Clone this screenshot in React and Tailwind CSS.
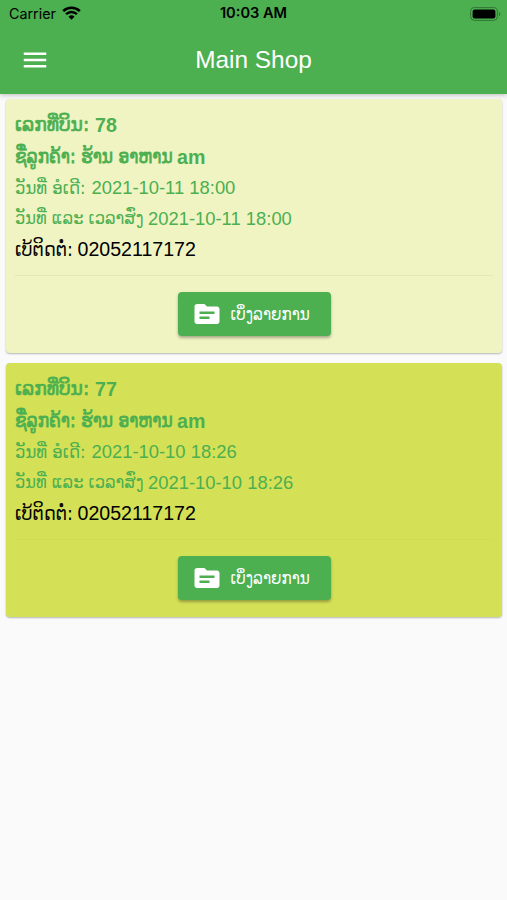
import { MdMenu, MdTopic } from 'react-icons/md';

const orders = [
  {
    bill: '78',
    customer: 'am',
    orderedAt: '2021-10-11 18:00',
    deliverAt: '2021-10-11 18:00',
    phone: '02052117172',
    background: 'bg-[#f0f4c3]',
    divider: 'bg-[#e4e8b9]'
  },
  {
    bill: '77',
    customer: 'am',
    orderedAt: '2021-10-10 18:26',
    deliverAt: '2021-10-10 18:26',
    phone: '02052117172',
    background: 'bg-[#d4e157]',
    divider: 'bg-[#cfdc55]'
  }
];

function StatusBar() {
  return (
    <div className="grid h-7 grid-cols-[1fr_auto_1fr] items-center px-[9px] text-black">
      <div className="flex items-center gap-[6px] font-['Inter'] text-[14.3px]">
        <span>Carrier</span>
        <svg
          className="-mt-[2px]"
          width="19"
          height="14"
          viewBox="0 0 19 14"
          fill="none"
          stroke="black"
        >
          <path d="M1.2 5.1a12 12 0 0 1 16.6 0" strokeWidth="2.7" />
          <path d="M4.1 8.2a7.8 7.8 0 0 1 10.8 0" strokeWidth="2.5" />
          <path d="M9.5 13.8 6.5 10.8a4.3 4.3 0 0 1 6 0z" fill="black" stroke="none" />
        </svg>
      </div>
      <div className="text-center font-['Inter'] text-[14.6px] font-semibold whitespace-nowrap">
        10:03 AM
      </div>
      <svg className="-mt-px -mr-[3px] justify-self-end" width="31" height="14" viewBox="0 0 31 14">
        <rect x="0.6" y="0.6" width="26.8" height="12.8" rx="4" fill="none" stroke="#317534" />
        <rect x="2.6" y="2.6" width="22.8" height="8.8" rx="2.2" fill="black" />
        <path d="M29 4.8c1.8.7 1.8 3.7 0 4.4z" fill="#317534" />
      </svg>
    </div>
  );
}

function Lao({ className, children }) {
  return (
    <span
      className={`inline-block shrink-0 font-['DejaVu_Sans',sans-serif] font-normal ${className}`}
    >
      {children}
    </span>
  );
}

function OrderCard({ order }) {
  return (
    <section
      className={`flex h-[254px] flex-col rounded-[4px] px-[9px] pt-[11px] shadow-[0_1px_2px_rgba(0,0,0,0.28)] ${order.background}`}
    >
      <div className="font-['Liberation_Sans',sans-serif] whitespace-nowrap text-[#4caf50]">
        <p className="flex h-8 items-center text-[19.6px] font-bold">
          <Lao className="mb-[2px] w-[80px] scale-y-106 text-[18.7px] [-webkit-text-stroke:0.7px_#4caf50]">
            ເລກທີ່ບິນ:
          </Lao>
          {order.bill}
        </p>
        <p className="flex h-[31px] items-center text-[19.6px] font-bold">
          <Lao className="mb-px w-[162px] scale-y-112 text-[17px] [-webkit-text-stroke:0.7px_#4caf50]">
            ຊື່ລູກຄ້າ: ຮ້ານ ອາຫານ
          </Lao>
          {order.customer}
        </p>
        <p className="flex h-[30px] items-center text-[18.4px]">
          <Lao className="w-[76.5px] scale-y-112 text-[16.5px]">ວັນທີ່ ອໍເດີ:</Lao>
          {order.orderedAt}
        </p>
        <p className="flex h-[31px] items-center text-[18.4px]">
          <Lao className="w-[133px] scale-y-112 text-[16.3px]">ວັນທີ່ ແລະ ເວລາສົ່ງ</Lao>
          {order.deliverAt}
        </p>
        <p className="flex h-8 items-center text-[19.6px] text-black">
          <Lao className="mb-px w-[62.5px] scale-y-112 text-[17.6px]">ເບ້ຕິດຕໍ່:</Lao>
          {order.phone}
        </p>
      </div>
      <div className={`mt-[9px] h-px shrink-0 ${order.divider}`} />
      <button className="mt-[16px] flex h-11 w-[153px] shrink-0 items-center self-center rounded-[4px] bg-[#4caf50] pl-[14px] text-white shadow-[0_2px_3px_rgba(0,0,0,0.3)]">
        <MdTopic className="size-[30px] shrink-0" />
        <Lao className="ml-[9px] scale-y-112 text-[15.2px] whitespace-nowrap">ເບິ່ງລາຍການ</Lao>
      </button>
    </section>
  );
}

function App() {
  return (
    <main className="min-h-screen bg-[#fafafa]">
      <header className="h-[94px] bg-[#4caf50] shadow-[0_1px_5px_rgba(0,0,0,0.25)]">
        <StatusBar />
        <div className="grid h-16 grid-cols-[60px_1fr_60px] items-center text-white">
          <MdMenu className="ml-5 size-[30px]" />
          <h1 className="text-center font-['Liberation_Sans',sans-serif] text-[24.4px]">
            Main Shop
          </h1>
        </div>
      </header>
      <div className="flex flex-col gap-[10px] pt-[5px] pr-[5px] pl-[6px]">
        {orders.map((order) => (
          <OrderCard key={order.bill} order={order} />
        ))}
      </div>
    </main>
  );
}

export default App;
